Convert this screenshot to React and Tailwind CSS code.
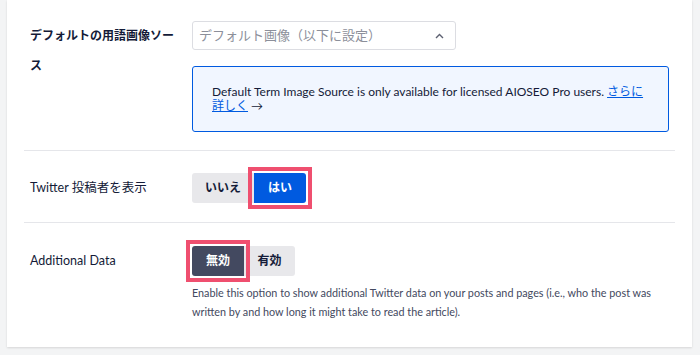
export default function App() {
  return (
    <div className="h-[355px] w-[700px] bg-[#f3f4f5] pl-[7px] pr-[8px] font-['Lato','Noto_Sans_CJK_JP',sans-serif] text-[#141b38]">
      <div className="h-[347px] bg-white px-[17px] shadow-[0_1px_2px_rgba(0,0,0,0.12)]">
        {/* default term image source */}
        <div className="flex border-b border-[#e5e6ea] pt-[21px] pb-[18px] pl-[6px]">
          <div className="w-[162px] shrink-0 pr-[12px] text-[12px] font-bold leading-[30px]">
            デフォルトの用語画像ソース
          </div>
          <div className="flex flex-col">
            <div className="flex h-[29px] w-[264px] items-center justify-between rounded-[3px] border border-[#dcdde2] pl-[6px] pr-[11px] text-[13px] text-[#8c8f9a]">
              <span>デフォルト画像（以下に設定）</span>
              <svg width="9" height="6" viewBox="0 0 9 6" fill="none">
                <polyline points="1,5 4.5,1.5 8,5" stroke="#5c6070" strokeWidth="1.4" />
              </svg>
            </div>
            <div className="mt-[16px] w-[477px] rounded-[3px] border border-[#005ae0] bg-[#f1f6ff] py-[18px] pl-[19px] pr-[16px] text-[12px] leading-[14px] text-[#141b38]">
              Default Term Image Source is only available for licensed AIOSEO Pro users.{" "}
              <a href="#" className="text-[#005ae0] underline">
                <span className="whitespace-nowrap">さらに</span>
                <br />
                詳しく
              </a>{" "}
              →
            </div>
          </div>
        </div>

        {/* twitter author */}
        <div className="flex items-center border-b border-[#e5e6ea] pt-[22px] pb-[19px] pl-[6px]">
          <div className="w-[162px] shrink-0 text-[12.5px]">Twitter 投稿者を表示</div>
          <div className="flex">
            <button className="h-[30px] w-[62px] rounded-l-[3px] bg-[#e8e8eb] text-[12px] font-bold text-[#141b38]">
              いいえ
            </button>
            <button className="relative h-[30px] w-[52px] rounded-r-[3px] bg-[#005ae0] text-[12px] font-bold text-white">
              はい
              <span className="absolute -inset-[6px] border-4 border-[#ef4f6f]" />
            </button>
          </div>
        </div>

        {/* additional data */}
        <div className="flex pt-[23px] pl-[6px]">
          <div className="w-[162px] shrink-0 pt-[6px] text-[12.5px]">Additional Data</div>
          <div className="flex flex-col">
            <div className="flex">
              <button className="relative h-[30px] w-[52px] rounded-l-[3px] bg-[#434960] text-[12px] font-bold text-white">
                無効
                <span className="absolute -inset-[6px] border-4 border-[#ef4f6f]" />
              </button>
              <button className="h-[30px] w-[51px] rounded-r-[3px] bg-[#e8e8eb] text-[12px] font-bold text-[#141b38]">
                有効
              </button>
            </div>
            <p className="mt-[7px] text-[10.8px] leading-[19px] text-[#434960]">
              Enable this option to show additional Twitter data on your posts and pages (i.e., who the post was
              <br />
              written by and how long it might take to read the article).
            </p>
          </div>
        </div>
      </div>
    </div>
  );
}
